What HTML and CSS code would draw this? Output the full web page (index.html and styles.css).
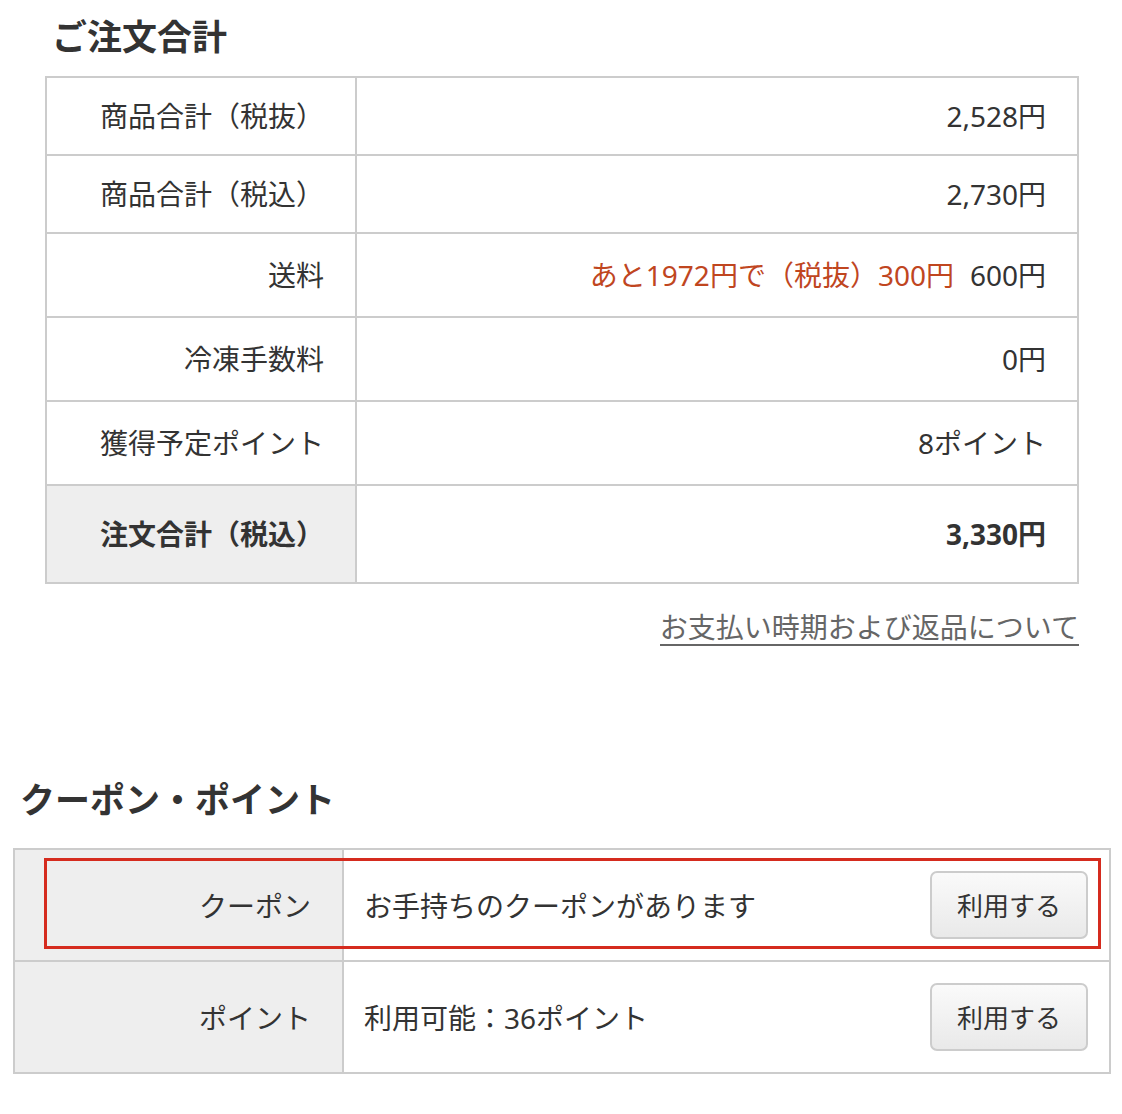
FILE: index.html
```html
<!DOCTYPE html>
<html lang="ja">
<head>
  <meta charset="UTF-8" />
  <meta name="viewport" content="width=device-width, initial-scale=1" />
  <title>ご注文合計</title>
  <link rel="stylesheet" href="styles.css">
</head>
<body>
  <section class="order-total">
    <h2 class="section-title">ご注文合計</h2>
    <table class="summary">
      <tr class="row-sm">
        <th>商品合計（税抜）</th>
        <td>2,528円</td>
      </tr>
      <tr class="row-sm">
        <th>商品合計（税込）</th>
        <td>2,730円</td>
      </tr>
      <tr class="row-md">
        <th>送料</th>
        <td><span class="free-note">あと1972円で（税抜）300円</span>600円</td>
      </tr>
      <tr class="row-md">
        <th>冷凍手数料</th>
        <td>0円</td>
      </tr>
      <tr class="row-md">
        <th>獲得予定ポイント</th>
        <td>8ポイント</td>
      </tr>
      <tr class="row-total">
        <th>注文合計（税込）</th>
        <td>3,330円</td>
      </tr>
    </table>
    <div class="notice">
      <a href="#" class="notice-link">お支払い時期および返品について</a>
    </div>
  </section>

  <section class="coupon-point">
    <h2 class="section-title">クーポン・ポイント</h2>
    <div class="benefit-wrap">
      <table class="benefits">
        <tr>
          <th>クーポン</th>
          <td>
            <div class="benefit-cell">
              <span>お手持ちのクーポンがあります</span>
              <button class="use-btn">利用する</button>
            </div>
          </td>
        </tr>
        <tr>
          <th>ポイント</th>
          <td>
            <div class="benefit-cell">
              <span>利用可能：36ポイント</span>
              <button class="use-btn">利用する</button>
            </div>
          </td>
        </tr>
      </table>
      <div class="highlight"></div>
    </div>
  </section>
</body>
</html>
```

FILE: styles.css
```css
* {
  margin: 0; padding: 0; box-sizing: border-box;
}
body {
  font-family: "Noto Sans", "Noto Sans CJK JP", sans-serif;
  color: #333;
  background: #fff;
  font-size: 28px;
}
.section-title {
  font-size: 35px;
  font-weight: bold;
  line-height: 49px;
  color: #333;
}
.order-total {
  padding: 12px 43px 0 45px;
}
.order-total .section-title {
  margin-left: 7px;
  margin-bottom: 15px;
}
table {
  width: 100%;
  border-collapse: collapse;
}
.summary th,
.summary td {
  border: 2px solid #ccc;
  vertical-align: middle;
  text-align: right;
  line-height: 1.3;
}
.summary th {
  width: 310px;
  font-weight: normal;
  padding: 0 31px 0 20px;
}
.summary td {
  padding: 0 31px 0 20px;
}
.summary .row-sm th { height: 78px; }
.summary .row-md th { height: 84px; }
.summary .row-total th {
  height: 98px;
  background: #eee;
  font-weight: bold;
}
.summary .row-total td {
  font-weight: bold;
}
.free-note {
  color: #c0461f;
  margin-right: 16px;
}
.notice {
  text-align: right;
  padding-top: 24px;
}
.notice-link {
  display: inline-block;
  color: #666;
  text-decoration: none;
  line-height: 34px;
  border-bottom: 2px solid #666;
}
.coupon-point {
  padding: 129px 11px 40px 13px;
}
.coupon-point .section-title {
  margin-left: 7px;
  margin-bottom: 24px;
}
.benefit-wrap {
  position: relative;
}
.benefits th,
.benefits td {
  border: 2px solid #ccc;
  height: 112px;
  vertical-align: middle;
}
.benefits th {
  width: 329px;
  background: #eee;
  font-weight: normal;
  text-align: right;
  padding: 0 31px 0 20px;
}
.benefits td {
  padding: 0 21px 0 20px;
}
.benefit-cell {
  display: flex;
  align-items: center;
  justify-content: space-between;
}
.use-btn {
  width: 158px;
  height: 68px;
  font-family: inherit;
  font-size: 26px;
  color: #333;
  border: 2px solid #ccc;
  border-radius: 7px;
  background: linear-gradient(#fafafa, #e9e9e9);
  cursor: pointer;
}
.highlight {
  position: absolute;
  top: 10px;
  left: 31px;
  right: 10px;
  height: 91px;
  border: 3px solid #d52b1e;
  pointer-events: none;
}
```
